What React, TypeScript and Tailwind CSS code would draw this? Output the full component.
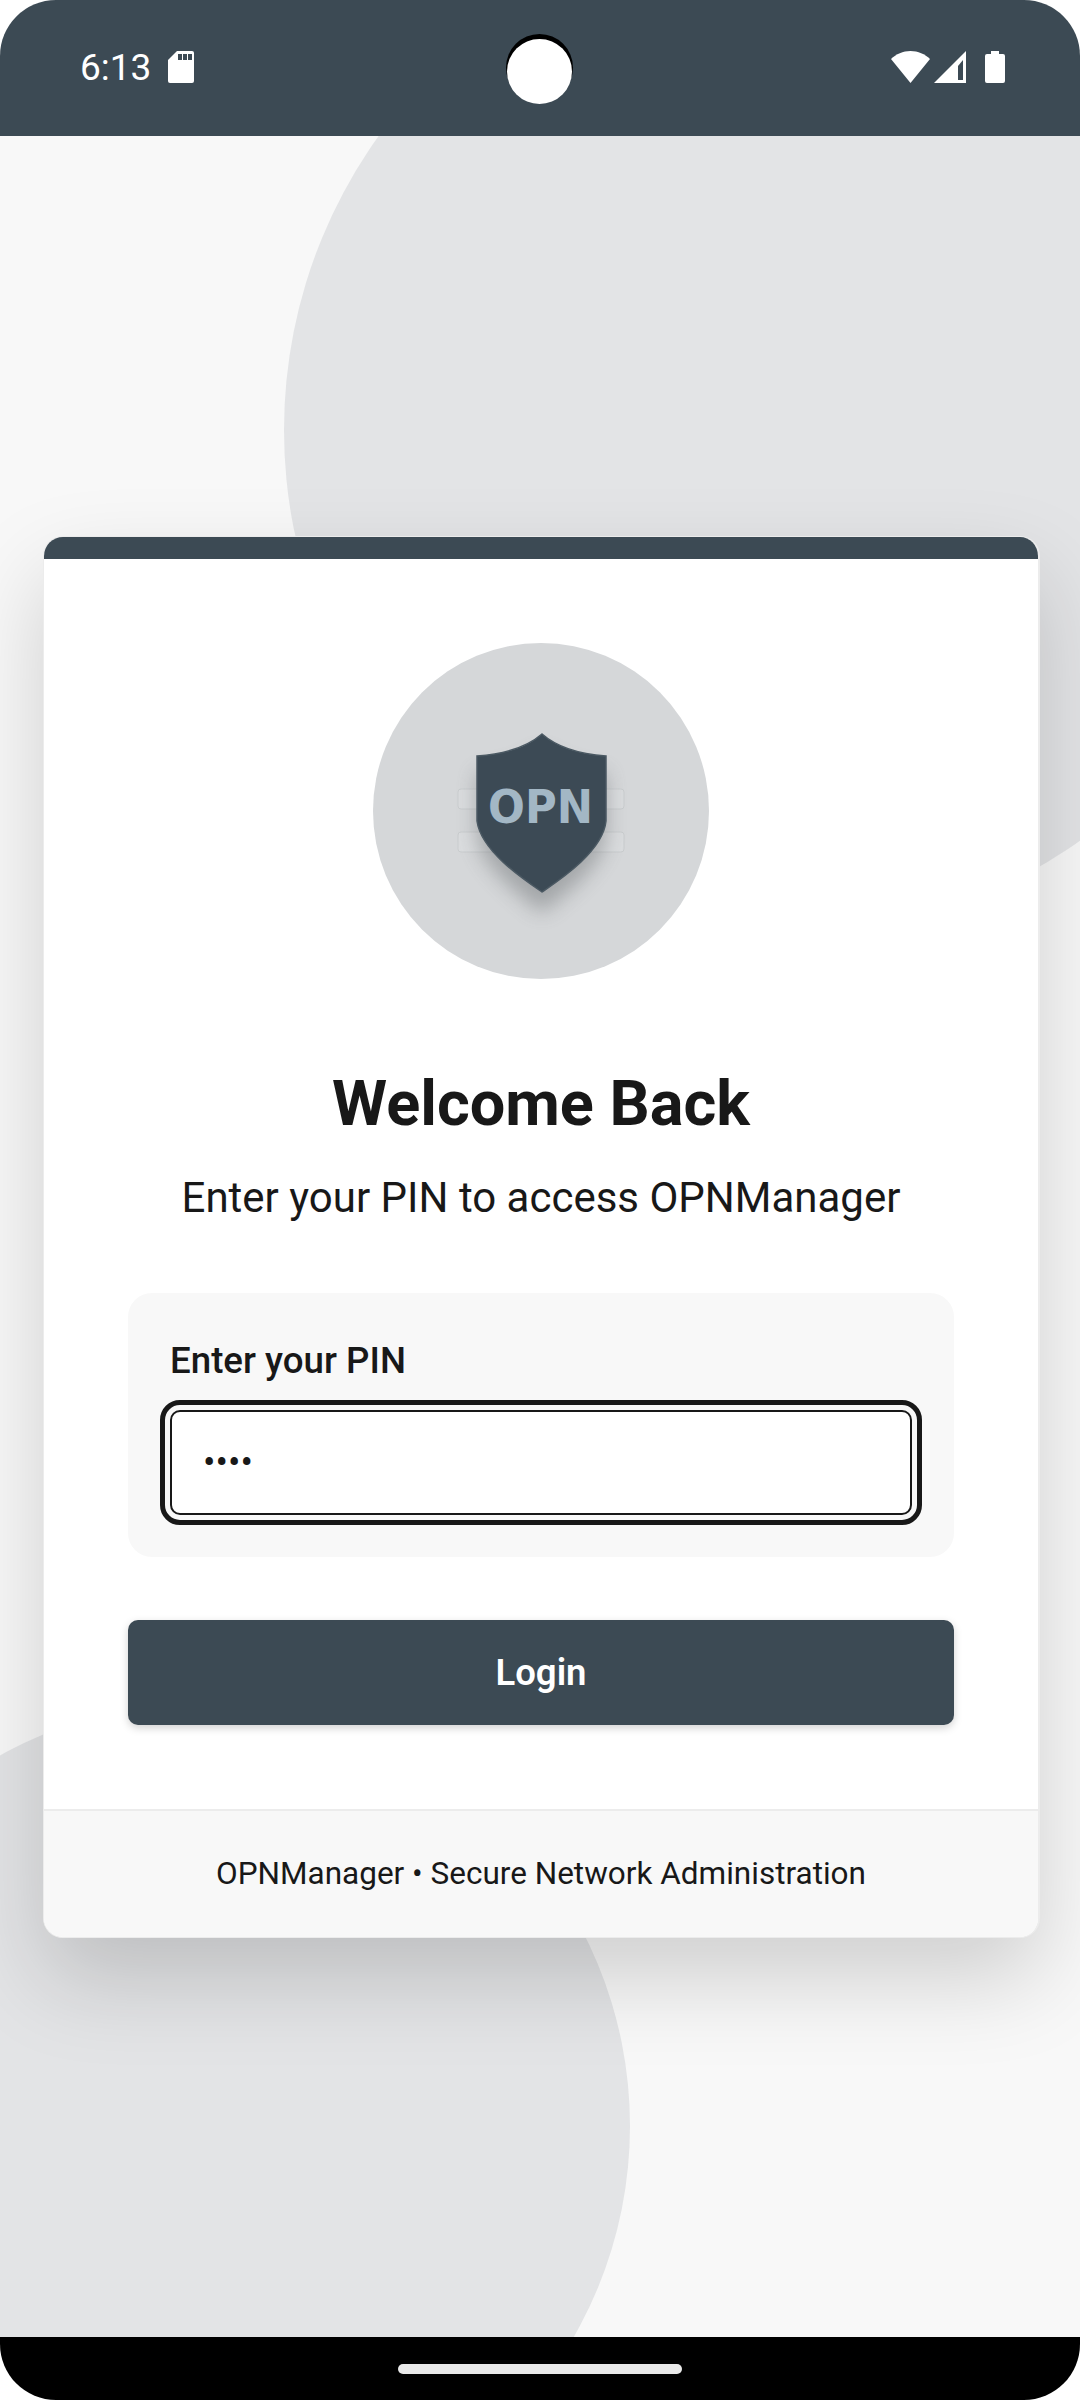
const FONT = "font-['Roboto','Liberation_Sans',sans-serif]";

const OpnLogo = () => (
  <div className="w-[336px] h-[336px] rounded-full bg-[#d5d7d9] overflow-hidden">
    <svg viewBox="0 0 336 336" className="w-full h-full">
      <defs>
        <filter id="drop" x="-40%" y="-40%" width="180%" height="180%">
          <feGaussianBlur stdDeviation="10" />
        </filter>
      </defs>
      {[146, 189].map((y) => (
        <g key={y} fill="#dadcde" stroke="#c9ccce" strokeWidth="1">
          <rect x="85" y={y} width="50" height="20" rx="3" />
          <rect x="201" y={y} width="50" height="20" rx="3" />
        </g>
      ))}
      <path
        d="M169 100 C153 114 132 120 104 122 L104 186 C108 216 150 246 169 262 C188 246 230 216 233 186 L233 122 C206 120 185 114 169 100 Z"
        fill="#5f6366"
        opacity="0.42"
        filter="url(#drop)"
        transform="translate(0 8)"
      />
      <path
        d="M169 91 C153 105 132 111 104 113 L104 178 C108 208 150 236 169 249 C188 236 230 208 233 178 L233 113 C206 111 185 105 169 91 Z"
        fill="#3c4a55"
        stroke="#4b5963"
        strokeWidth="1.5"
      />
      <text
        x="115"
        y="180"
        textLength="105"
        lengthAdjust="spacingAndGlyphs"
        fontFamily="'DejaVu Sans', Roboto, sans-serif"
        fontSize="47"
        fontWeight="700"
        fill="#a3b7c5"
      >
        OPN
      </text>
    </svg>
  </div>
);

const StatusBar = () => (
  <div className="relative h-[136px] shrink-0 bg-[#3c4a54] rounded-t-[56px] flex items-center justify-between pl-[80px] pr-[75px] pb-[2px]">
    <div className="flex items-center gap-[17px] text-white">
      <span className="text-[37px] leading-none">6:13</span>
      <svg width="26" height="32" viewBox="0 0 26 32" fill="#fff">
        <path d="M9 0 H24 A2 2 0 0 1 26 2 V30 A2 2 0 0 1 24 32 H2 A2 2 0 0 1 0 30 V9 Z" />
        <rect x="10" y="3" width="4" height="6" fill="#3c4a54" />
        <rect x="15" y="3" width="4" height="6" fill="#3c4a54" />
        <rect x="20" y="3" width="4" height="6" fill="#3c4a54" />
      </svg>
    </div>

    {/* camera cutout */}
    <div className="absolute left-[506px] top-[34px] w-[67px] h-[67px] rounded-full bg-black">
      <div className="absolute left-[1px] top-[5px] w-[65px] h-[65px] rounded-full bg-white" />
    </div>

    <div className="flex items-center">
      <svg width="39" height="32" viewBox="0 0 39 32" fill="#fff">
        <path d="M19.5 32 L0 8 C5 3 12 0 19.5 0 C27 0 34 3 39 8 Z" />
      </svg>
      <svg className="ml-[4px]" width="32" height="32" viewBox="0 0 32 32">
        <path d="M32 0 V32 H0 Z" fill="#fff" />
        <path d="M29 9 L24 15 V29 H29 Z" fill="#3c4a54" />
      </svg>
      <svg className="ml-[19px]" width="20" height="32" viewBox="0 0 20 32" fill="#fff">
        <path d="M6 0 H14 V3 H18 A2 2 0 0 1 20 5 V30 A2 2 0 0 1 18 32 H2 A2 2 0 0 1 0 30 V5 A2 2 0 0 1 2 3 H6 Z" />
      </svg>
    </div>
  </div>
);

export default function App() {
  return (
    <div className={`w-[1080px] h-[2400px] flex flex-col bg-white overflow-hidden ${FONT}`}>
      <StatusBar />

      <main className="relative flex-1 overflow-hidden bg-[#f8f8f8] flex flex-col pt-[400px]">
        {/* background blobs */}
        <div className="absolute left-[284px] top-[-210px] w-[1008px] h-[1008px] rounded-full bg-[#e3e4e6]" />
        <div className="absolute left-[-218px] top-[1566px] w-[848px] h-[848px] rounded-full bg-[#e3e4e6]" />

        <div className="relative ml-[43px] w-[997px] rounded-[20px] border-t border-b border-l border-r-2 border-[#ececec] bg-white overflow-hidden shadow-[0_40px_90px_rgba(0,0,0,0.17)]">
          <div className="h-[22px] bg-[#3c4a54]" />

          <div className="flex flex-col items-center px-[84px] pt-[84px] pb-[84px]">
            <OpnLogo />
            <h1 className="mt-[90px] text-[63px] leading-[70px] font-bold text-[#181818]">Welcome Back</h1>
            <p className="mt-[34px] text-[42px] leading-[50px] text-[#181818]">Enter your PIN to access OPNManager</p>

            <div className="mt-[70px] w-full rounded-[24px] bg-[#f8f8f8] px-[42px] pt-[46px] pb-[42px]">
              <label className="block text-[36.7px] leading-[44px] font-medium text-[#181818]">Enter your PIN</label>
              <input
                type="password"
                value="1234"
                readOnly
                className="mt-[27px] block w-full h-[105px] rounded-[10px] bg-white border-2 border-[#181818] outline-[5px] outline-offset-[5px] outline-solid outline-[#181818] pl-[31px] text-[37px] text-[#181818]"
              />
            </div>

            <button className="mt-[63px] w-full h-[105px] pt-[2px] rounded-[10px] bg-[#3c4a54] text-white text-[36.5px] font-semibold shadow-[0_3px_8px_rgba(0,0,0,0.18)]">
              Login
            </button>
          </div>

          <div className="h-[128px] border-t-2 border-[#ececec] bg-[#f8f8f8] flex items-center justify-center text-[31.5px] text-[#181818]">
            OPNManager • Secure Network Administration
          </div>
        </div>
      </main>

      <div className="h-[63px] shrink-0 bg-black rounded-b-[56px] flex items-center justify-center">
        <div className="w-[284px] h-[10px] rounded-full bg-[#e9e9e9]" />
      </div>
    </div>
  );
}
